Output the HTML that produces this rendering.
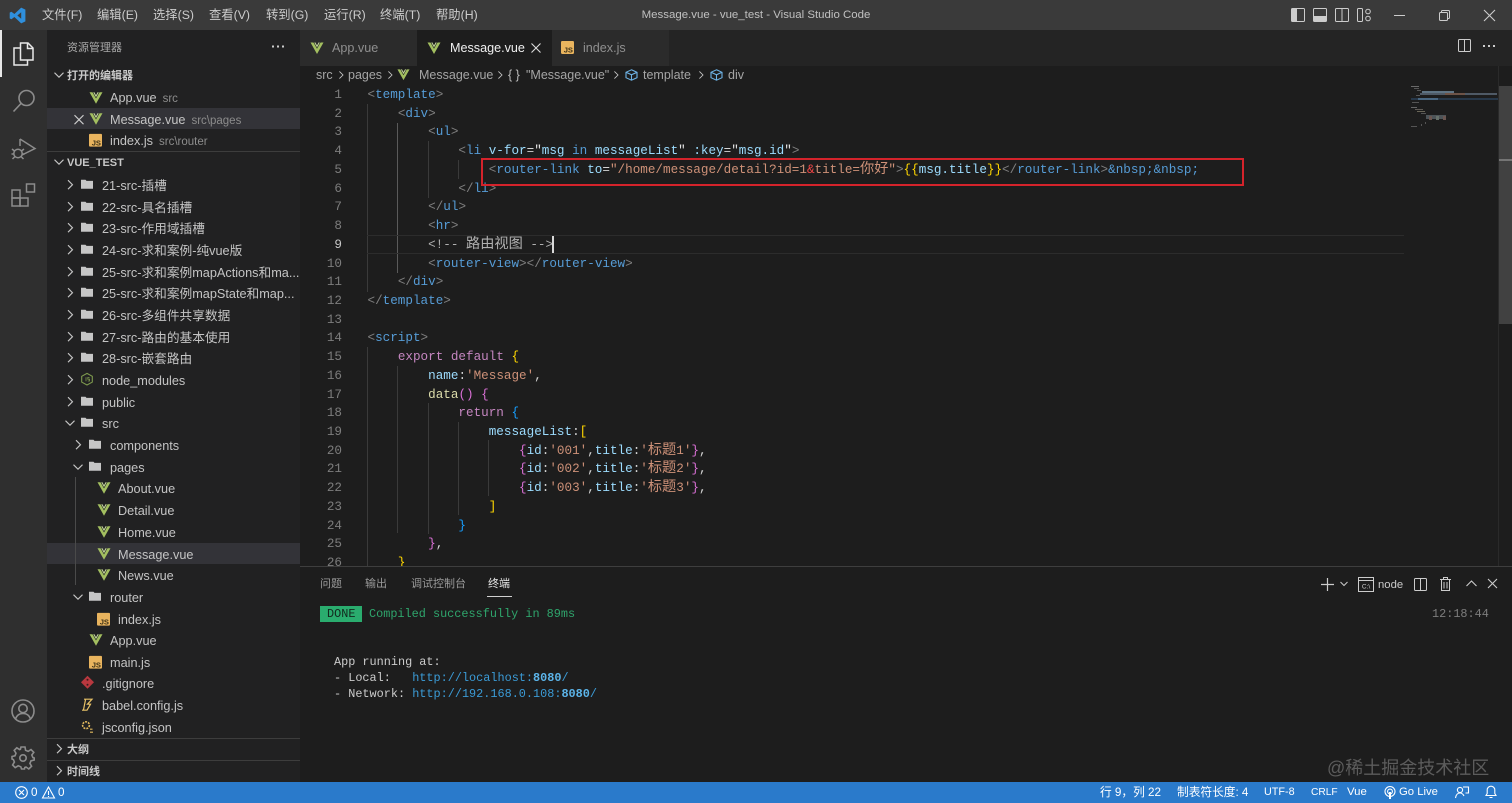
<!DOCTYPE html>
<html lang="zh"><head><meta charset="utf-8"><title>Message.vue - vue_test - Visual Studio Code</title>
<style>
*{box-sizing:border-box;margin:0;padding:0}
html,body{width:1512px;height:803px;overflow:hidden;background:#1d1d1d}
body{position:relative;font-family:"Liberation Sans","Noto Sans CJK SC",sans-serif;color:#ccc;font-size:13px}
.x{position:absolute;white-space:nowrap}
svg{position:absolute;overflow:visible}
.m{top:6px;font-size:12.3px;line-height:18px;color:#ccc}
.r{position:absolute;left:47px;width:253px;height:22px;line-height:22px;white-space:nowrap;overflow:hidden;color:#c4c4c4;font-size:12.7px}
.r span{position:absolute;top:1px}
.r svg{top:5px;transform:translateY(.7px)}
.r em{font-style:normal;font-size:11.5px;color:#8c8c8c;margin-left:6px}
.sel{background:#333338}
.h{font-size:11px;font-weight:bold;color:#c8c8c8}
.l{position:absolute;left:367.5px;height:19px;line-height:19px;white-space:pre;font-family:"Liberation Mono",monospace;font-size:12.63px;color:#d4d4d4}
.n{position:absolute;left:310px;width:32px;text-align:right;height:19px;line-height:19px;font-family:"Liberation Mono",monospace;font-size:12.63px;color:#7d7d7d}
.z{font-family:"Noto Sans CJK SC",sans-serif;font-size:14.2px;line-height:0;font-style:normal}
.g{color:#808080}.b{color:#569cd6}.a{color:#9cdcfe}.s{color:#ce9178}.p{color:#c586c0}.y{color:#dcdcaa}
.q{color:#ffd700}.v{color:#da70d6}.t{color:#179fff}.w{color:#e4e4e4}.c{color:#b0b0b0}.e{color:#f44747}
.gd{position:absolute;width:1px;background:#3a3a3a}
.tm{position:absolute;left:320px;white-space:pre;font-family:"Liberation Mono",monospace;font-size:11.85px;line-height:16px;color:#ccc}
.lk{color:#3b9bd6}.lkb{color:#5cb5ea;font-weight:bold}
.pt{position:absolute;top:576px;font-size:11px;line-height:16px;color:#9a9a9a}
.st{position:absolute;top:784px;font-size:11.7px;line-height:17px;color:#fff;white-space:nowrap}
.tab{position:absolute;top:30px;height:36px;line-height:36px;font-size:12.6px}
.bc{position:absolute;top:66px;line-height:18px;font-size:12.5px;color:#a5a5a5;white-space:nowrap}
</style></head><body>
<svg width="0" height="0" style="position:absolute">
<defs>
<symbol id="vue" viewBox="0 0 14 14"><path d="M0.5 1.5H3.5L7 7.8 10.5 1.5H13.5L7 13Z" fill="#a3bf60"/><path d="M3.6 1.5H5.2L7 4.6 8.8 1.5H10.4L7 7.4Z" fill="#2f3526"/><path d="M4.8 1.5L7 5.4 9.2 1.5" fill="none" stroke="#c8d8a0" stroke-width="1"/></symbol>
<symbol id="js" viewBox="0 0 13 13"><rect width="13" height="13" rx="1.2" fill="#e9b45e"/><text x="12" y="11.6" text-anchor="end" font-family="Liberation Sans" font-size="7.6" font-weight="bold" fill="#3c3118">JS</text></symbol>
<symbol id="cr" viewBox="0 0 10 10"><path d="M3 .5L7.5 5 3 9.5" fill="none" stroke="#c5c5c5" stroke-width="1.1"/></symbol>
<symbol id="cd" viewBox="0 0 10 10"><path d="M.5 3L5 7.5 9.5 3" fill="none" stroke="#c5c5c5" stroke-width="1.1"/></symbol>
<symbol id="fd" viewBox="0 0 12 11"><path d="M0 1H4.5L5.5 2.2H12V10H0Z" fill="#c6c6c6"/></symbol>
</defs></svg>

<!-- title bar -->
<div class="x" style="left:0;top:0;width:1512px;height:30px;background:#3a3a3a"></div>
<svg style="left:9px;top:7px" width="17" height="17" viewBox="0 0 17 17"><path d="M12.2.6L16.4 2.6V14.4L12.2 16.4 5.4 10 2.4 12.3 .7 11.4V5.6L2.4 4.7 5.4 7ZM12.2 5.2L8.4 8.5 12.2 11.8Z" fill="#2f8fdc"/></svg>
<div class="x m" style="left:42px">文件(F)</div>
<div class="x m" style="left:97px">编辑(E)</div>
<div class="x m" style="left:153px">选择(S)</div>
<div class="x m" style="left:209px">查看(V)</div>
<div class="x m" style="left:266px">转到(G)</div>
<div class="x m" style="left:324px">运行(R)</div>
<div class="x m" style="left:380px">终端(T)</div>
<div class="x m" style="left:436px">帮助(H)</div>
<div class="x" style="left:556px;width:400px;text-align:center;top:6px;font-size:11.45px;line-height:18px;color:#c0c0c0">Message.vue - vue_test - Visual Studio Code</div>
<svg style="left:1291px;top:8px" width="14" height="14"><rect x=".5" y=".5" width="13" height="13" rx="1" fill="none" stroke="#ccc"/><rect x="1" y="1" width="5" height="12" fill="#ccc"/></svg>
<svg style="left:1313px;top:8px" width="14" height="14"><rect x=".5" y=".5" width="13" height="13" rx="1" fill="none" stroke="#ccc"/><rect x="1" y="8" width="12" height="5" fill="#ccc"/></svg>
<svg style="left:1335px;top:8px" width="14" height="14"><rect x=".5" y=".5" width="13" height="13" rx="1" fill="none" stroke="#ccc"/><path d="M7 1V13" stroke="#ccc"/></svg>
<svg style="left:1357px;top:8px" width="14" height="14"><rect x=".5" y=".5" width="5" height="13" rx="1" fill="none" stroke="#ccc"/><circle cx="11" cy="3.5" r="2.3" fill="none" stroke="#ccc"/><circle cx="11" cy="10.5" r="2.3" fill="none" stroke="#ccc"/></svg>
<svg style="left:1394px;top:15px" width="11" height="1"><rect width="11" height="1" fill="#ccc"/></svg>
<svg style="left:1439px;top:10px" width="11" height="11" fill="none" stroke="#ccc"><rect x=".5" y="2.5" width="8" height="8" rx="1"/><path d="M2.5 2.5V1.5A1 1 0 0 1 3.5 .5H9.5A1 1 0 0 1 10.5 1.5V7.5A1 1 0 0 1 9.5 8.5H8.5"/></svg>
<svg style="left:1484px;top:10px" width="11" height="11" stroke="#ccc" stroke-width="1.1"><path d="M0 0L11 11M11 0L0 11"/></svg>

<!-- activity bar -->
<div class="x" style="left:0;top:30px;width:47px;height:752px;background:#2f2f2f"></div>
<div class="x" style="left:0;top:30px;width:2px;height:47px;background:#e8e8e8"></div>
<svg style="left:12px;top:42px" width="23" height="24" fill="none" stroke="#e8e8e8" stroke-width="1.5"><path d="M8.5 1H16L21 6V18H8.5Z"/><path d="M15.5 1V6.5H21"/><path d="M8.5 6H2V23H15.5V18"/></svg>
<svg style="left:12px;top:89px" width="24" height="24" fill="none" stroke="#8c8c8c" stroke-width="1.6"><circle cx="14.5" cy="9" r="7.5"/><path d="M9 14.5L1.5 22.5"/></svg>
<svg style="left:11px;top:136px" width="26" height="24" fill="none" stroke="#8c8c8c" stroke-width="1.5"><path d="M9 3L24 12.5 11 19"/><path d="M9 3V10"/><circle cx="7" cy="17.5" r="4.2"/><path d="M1 13L3.5 15M13 13L10.5 15M.5 18H3M13.5 18H11M1.5 23L4 20.5M12.5 23L10 20.5"/></svg>
<svg style="left:11px;top:183px" width="25" height="25" fill="none" stroke="#8c8c8c" stroke-width="1.5"><rect x="1" y="7" width="8" height="8"/><rect x="1" y="15" width="8" height="8"/><rect x="9" y="15" width="8" height="8"/><rect x="15.5" y="1" width="8" height="8"/></svg>
<svg style="left:11px;top:699px" width="24" height="24" fill="none" stroke="#8c8c8c" stroke-width="1.6"><circle cx="12" cy="12" r="11"/><circle cx="12" cy="9.5" r="4.2"/><path d="M4.5 20C6 15.5 9 14.5 12 14.5S18 15.5 19.5 20"/></svg>
<svg style="left:11px;top:746px" width="24" height="24" viewBox="0 0 24 24" fill="none" stroke="#8c8c8c" stroke-width="1.6"><path d="M10 1H14L14.6 4.3 17.2 5.4 20 3.5 22.8 6.3 20.8 9 21.9 11.6 23.2 12V14L20 14.8 18.9 17.4 20.6 20.2 17.8 23 15 21 13.8 21.5 13.5 23H10.5L9.8 20.8 7.2 19.8 4.2 21.6 1.6 19 3.4 16 2.4 13.6 1 13V10.5L4 9.8 5 7.2 3.2 4.4 5.8 1.8 8.6 3.6 9.4 3.3Z"/><circle cx="12" cy="12" r="3.2"/></svg>

<!-- sidebar -->
<div class="x" style="left:47px;top:30px;width:253px;height:752px;background:#212122"></div>
<div class="x" style="left:67px;top:39.5px;font-size:11px;line-height:16px;color:#a8a8a8">资源管理器</div>
<svg style="left:272px;top:45px" width="13" height="3" fill="#ccc"><rect width="2" height="2" y=".5"/><rect x="5" width="2" height="2" y=".5"/><rect x="10" width="2" height="2" y=".5"/></svg>

<div class="r" style="top:64px"><svg style="left:7px" width="10" height="10"><use href="#cd"/></svg><span class="h" style="left:20px">打开的编辑器</span></div>
<div class="r" style="top:86px"><svg style="left:42px;top:4px" width="14" height="14"><use href="#vue"/></svg><span style="left:63px">App.vue<em>src</em></span></div>
<div class="r sel" style="top:108px;height:21px"><svg style="left:27px;top:6px" width="10" height="10" stroke="#ccc" stroke-width="1.1"><path d="M.5 .5L9.5 9.5M9.5 .5L.5 9.5"/></svg><svg style="left:42px;top:3px" width="14" height="14"><use href="#vue"/></svg><span style="left:63px">Message.vue<em>src\pages</em></span></div>
<div class="r" style="top:129px"><svg style="left:42px;top:4px" width="13" height="13"><use href="#js"/></svg><span style="left:63px">index.js<em>src\router</em></span></div>

<div class="x" style="left:47px;top:151px;width:253px;height:1px;background:#3d3d3d"></div>
<div class="r" style="top:151px"><svg style="left:7px" width="10" height="10"><use href="#cd"/></svg><span class="h" style="left:20px">VUE_TEST</span></div>

<div class="r" style="top:174px"><svg style="left:18px" width="10" height="10"><use href="#cr"/></svg><svg style="left:34px;top:4px" width="12" height="11"><use href="#fd"/></svg><span style="left:55px">21-src-插槽</span></div>
<div class="r" style="top:195.5px"><svg style="left:18px" width="10" height="10"><use href="#cr"/></svg><svg style="left:34px;top:4px" width="12" height="11"><use href="#fd"/></svg><span style="left:55px">22-src-具名插槽</span></div>
<div class="r" style="top:217px"><svg style="left:18px" width="10" height="10"><use href="#cr"/></svg><svg style="left:34px;top:4px" width="12" height="11"><use href="#fd"/></svg><span style="left:55px">23-src-作用域插槽</span></div>
<div class="r" style="top:239px"><svg style="left:18px" width="10" height="10"><use href="#cr"/></svg><svg style="left:34px;top:4px" width="12" height="11"><use href="#fd"/></svg><span style="left:55px">24-src-求和案例-纯vue版</span></div>
<div class="r" style="top:260.5px"><svg style="left:18px" width="10" height="10"><use href="#cr"/></svg><svg style="left:34px;top:4px" width="12" height="11"><use href="#fd"/></svg><span style="left:55px">25-src-求和案例mapActions和ma...</span></div>
<div class="r" style="top:282px"><svg style="left:18px" width="10" height="10"><use href="#cr"/></svg><svg style="left:34px;top:4px" width="12" height="11"><use href="#fd"/></svg><span style="left:55px">25-src-求和案例mapState和map...</span></div>
<div class="r" style="top:304px"><svg style="left:18px" width="10" height="10"><use href="#cr"/></svg><svg style="left:34px;top:4px" width="12" height="11"><use href="#fd"/></svg><span style="left:55px">26-src-多组件共享数据</span></div>
<div class="r" style="top:325.5px"><svg style="left:18px" width="10" height="10"><use href="#cr"/></svg><svg style="left:34px;top:4px" width="12" height="11"><use href="#fd"/></svg><span style="left:55px">27-src-路由的基本使用</span></div>
<div class="r" style="top:347px"><svg style="left:18px" width="10" height="10"><use href="#cr"/></svg><svg style="left:34px;top:4px" width="12" height="11"><use href="#fd"/></svg><span style="left:55px">28-src-嵌套路由</span></div>
<div class="r" style="top:369px"><svg style="left:18px" width="10" height="10"><use href="#cr"/></svg><svg style="left:34px;top:3px" width="12" height="13" viewBox="0 0 12 13" fill="none" stroke="#7e9a4e" stroke-width="1.1"><path d="M6 .7L11.3 3.6V9.4L6 12.3 .7 9.4V3.6Z"/><path d="M5 4.5V8.5M8.5 4.8H6.8V6.5H8.5V8.3H6.8" stroke-width=".8"/></svg><span style="left:55px">node_modules</span></div>
<div class="r" style="top:390.5px"><svg style="left:18px" width="10" height="10"><use href="#cr"/></svg><svg style="left:34px;top:4px" width="12" height="11"><use href="#fd"/></svg><span style="left:55px">public</span></div>
<div class="r" style="top:412px"><svg style="left:18px" width="10" height="10"><use href="#cd"/></svg><svg style="left:34px;top:4px" width="12" height="11"><use href="#fd"/></svg><span style="left:55px">src</span></div>
<div class="r" style="top:434px"><svg style="left:26px" width="10" height="10"><use href="#cr"/></svg><svg style="left:42px;top:4px" width="12" height="11"><use href="#fd"/></svg><span style="left:63px">components</span></div>
<div class="r" style="top:456px"><svg style="left:26px" width="10" height="10"><use href="#cd"/></svg><svg style="left:42px;top:4px" width="12" height="11"><use href="#fd"/></svg><span style="left:63px">pages</span></div>
<div class="r" style="top:477px"><svg style="left:50px;top:3px" width="14" height="14"><use href="#vue"/></svg><span style="left:71px">About.vue</span></div>
<div class="r" style="top:499px"><svg style="left:50px;top:3px" width="14" height="14"><use href="#vue"/></svg><span style="left:71px">Detail.vue</span></div>
<div class="r" style="top:521px"><svg style="left:50px;top:3px" width="14" height="14"><use href="#vue"/></svg><span style="left:71px">Home.vue</span></div>
<div class="r sel" style="top:543px;height:21px"><svg style="left:50px;top:3px" width="14" height="14"><use href="#vue"/></svg><span style="left:71px">Message.vue</span></div>
<div class="r" style="top:564px"><svg style="left:50px;top:3px" width="14" height="14"><use href="#vue"/></svg><span style="left:71px">News.vue</span></div>
<div class="x" style="left:75px;top:477px;width:1px;height:108px;background:#4a4a4a"></div>
<div class="r" style="top:586px"><svg style="left:26px" width="10" height="10"><use href="#cd"/></svg><svg style="left:42px;top:4px" width="12" height="11"><use href="#fd"/></svg><span style="left:63px">router</span></div>
<div class="r" style="top:607.5px"><svg style="left:50px;top:4px" width="13" height="13"><use href="#js"/></svg><span style="left:71px">index.js</span></div>
<div class="r" style="top:629px"><svg style="left:42px;top:3px" width="14" height="14"><use href="#vue"/></svg><span style="left:63px">App.vue</span></div>
<div class="r" style="top:650.5px"><svg style="left:42px;top:4px" width="13" height="13"><use href="#js"/></svg><span style="left:63px">main.js</span></div>
<div class="r" style="top:672px"><svg style="left:34px;top:3px" width="13" height="13" viewBox="0 0 13 13"><path d="M6.5 0L13 6.5 6.5 13 0 6.5Z" fill="#b8383f"/><circle cx="6.5" cy="4" r="1" fill="#3a1a1c"/><circle cx="6.5" cy="9" r="1" fill="#3a1a1c"/></svg><span style="left:55px">.gitignore</span></div>
<div class="r" style="top:694px"><svg style="left:34px;top:3px" width="12" height="14" viewBox="0 0 12 14" fill="none" stroke="#e8c267" stroke-width="1.2"><path d="M3 1.5H11L6.5 6.5H9.5L6 12.5H1M4.5 2L2.5 12"/></svg><span style="left:55px">babel.config.js</span></div>
<div class="r" style="top:716px"><svg style="left:34px;top:3px" width="13" height="14" viewBox="0 0 13 14" fill="none" stroke="#e0b85e" stroke-width="1.6"><circle cx="5" cy="5.5" r="3.4" stroke-dasharray="2 1"/><path d="M9 9.5H11.5M9 12.5H12" stroke-width="1.2"/></svg><span style="left:55px">jsconfig.json</span></div>
<div class="x" style="left:47px;top:738px;width:253px;height:1px;background:#3d3d3d"></div>
<div class="r" style="top:738px"><svg style="left:7px" width="10" height="10"><use href="#cr"/></svg><span class="h" style="left:20px">大纲</span></div>
<div class="x" style="left:47px;top:760px;width:253px;height:1px;background:#3d3d3d"></div>
<div class="r" style="top:760px"><svg style="left:7px" width="10" height="10"><use href="#cr"/></svg><span class="h" style="left:20px">时间线</span></div>

<!-- tabs -->
<div class="x" style="left:300px;top:30px;width:1212px;height:36px;background:#242424"></div>
<div class="tab" style="left:300px;width:117px;background:#2b2b2b;color:#8f8f8f"><svg style="left:10px;top:11px" width="14" height="14"><use href="#vue"/></svg><span class="x" style="left:32px">App.vue</span></div>
<div class="tab" style="left:417px;width:135px;background:#1d1d1d;color:#f0f0f0"><svg style="left:10px;top:11px" width="14" height="14"><use href="#vue"/></svg><span class="x" style="left:33px">Message.vue</span><svg style="left:114px;top:13px" width="10" height="10" stroke="#ddd" stroke-width="1.1"><path d="M.5 .5L9.5 9.5M9.5 .5L.5 9.5"/></svg></div>
<div class="tab" style="left:552px;width:117px;background:#2b2b2b;color:#8f8f8f"><svg style="left:9px;top:11px" width="13" height="13"><use href="#js"/></svg><span class="x" style="left:31px">index.js</span></div>
<svg style="left:1458px;top:39px" width="13" height="13" fill="none" stroke="#ccc"><rect x=".5" y=".5" width="12" height="12" rx="1"/><path d="M6.5 1V12.5"/></svg>
<svg style="left:1483px;top:45px" width="13" height="3" fill="#ccc"><rect width="2" height="2"/><rect x="5" width="2" height="2"/><rect x="10" width="2" height="2"/></svg>

<!-- breadcrumbs -->
<div class="bc" style="left:316px">src</div>
<svg style="left:337px;top:71px" width="8" height="8"><use href="#cr"/></svg>
<div class="bc" style="left:348px">pages</div>
<svg style="left:386px;top:71px" width="8" height="8"><use href="#cr"/></svg>
<svg style="left:397px;top:68px" width="13" height="13"><use href="#vue"/></svg>
<div class="bc" style="left:419px">Message.vue</div>
<svg style="left:496px;top:71px" width="8" height="8"><use href="#cr"/></svg>
<div class="bc" style="left:508px;color:#bbb">{ }</div>
<div class="bc" style="left:526px">"Message.vue"</div>
<svg style="left:612px;top:71px" width="8" height="8"><use href="#cr"/></svg>
<svg style="left:625px;top:69px" width="13" height="12" viewBox="0 0 13 12" fill="none" stroke="#6eb3e6" stroke-width="1.1"><path d="M6.5 .8L12 3.3V8.7L6.5 11.2 1 8.7V3.3ZM1 3.3L6.5 5.8 12 3.3M6.5 5.8V11"/></svg>
<div class="bc" style="left:643px">template</div>
<svg style="left:697px;top:71px" width="8" height="8"><use href="#cr"/></svg>
<svg style="left:710px;top:69px" width="13" height="12" viewBox="0 0 13 12" fill="none" stroke="#6eb3e6" stroke-width="1.1"><path d="M6.5 .8L12 3.3V8.7L6.5 11.2 1 8.7V3.3ZM1 3.3L6.5 5.8 12 3.3M6.5 5.8V11"/></svg>
<div class="bc" style="left:728px">div</div>

<!-- indent guides -->
<div class="gd" style="left:367px;top:104px;height:188px"></div>
<div class="gd" style="left:397px;top:123px;height:150px;background:#5a5a5a"></div>
<div class="gd" style="left:428px;top:141px;height:57px"></div>
<div class="gd" style="left:458px;top:160px;height:19px"></div>
<div class="gd" style="left:367px;top:347px;height:219px"></div>
<div class="gd" style="left:397px;top:366px;height:167px"></div>
<div class="gd" style="left:428px;top:403px;height:131px"></div>
<div class="gd" style="left:458px;top:422px;height:93px"></div>
<div class="gd" style="left:488px;top:440px;height:56px"></div>
<!-- current line -->
<div class="x" style="left:367px;top:235px;width:1037px;height:19px;border-top:1px solid #2c2c2c;border-bottom:1px solid #2c2c2c"></div>

<!-- line numbers -->
<div class="n" style="top:85px">1</div><div class="n" style="top:103.7px">2</div><div class="n" style="top:122.4px">3</div><div class="n" style="top:141.2px">4</div><div class="n" style="top:159.9px">5</div><div class="n" style="top:178.6px">6</div><div class="n" style="top:197.3px">7</div><div class="n" style="top:216px">8</div><div class="n" style="top:234.8px;color:#c6c6c6">9</div><div class="n" style="top:253.5px">10</div><div class="n" style="top:272.2px">11</div><div class="n" style="top:290.9px">12</div><div class="n" style="top:309.6px">13</div><div class="n" style="top:328.4px">14</div><div class="n" style="top:347.1px">15</div><div class="n" style="top:365.8px">16</div><div class="n" style="top:384.5px">17</div><div class="n" style="top:403.2px">18</div><div class="n" style="top:422px">19</div><div class="n" style="top:440.7px">20</div><div class="n" style="top:459.4px">21</div><div class="n" style="top:478.1px">22</div><div class="n" style="top:496.8px">23</div><div class="n" style="top:515.6px">24</div><div class="n" style="top:534.3px">25</div><div class="n" style="top:553px;height:13px;overflow:hidden">26</div>

<!-- code -->
<div class="l" style="top:85px"><span class="g">&lt;</span><span class="b">template</span><span class="g">&gt;</span></div>
<div class="l" style="top:103.7px">    <span class="g">&lt;</span><span class="b">div</span><span class="g">&gt;</span></div>
<div class="l" style="top:122.4px">        <span class="g">&lt;</span><span class="b">ul</span><span class="g">&gt;</span></div>
<div class="l" style="top:141.2px">            <span class="g">&lt;</span><span class="b">li</span> <span class="a">v-for</span>=<span class="w">"</span><span class="a">msg</span> <span class="b">in</span> <span class="a">messageList</span><span class="w">"</span> <span class="a">:key</span>=<span class="w">"</span><span class="a">msg.id</span><span class="w">"</span><span class="g">&gt;</span></div>
<div class="l" style="top:159.9px">                <span class="g">&lt;</span><span class="b">router-link</span> <span class="a">to</span>=<span class="s">"/home/message/detail?id=1</span><span class="e">&amp;</span><span class="s">title=<i class="z">你好</i>"</span><span class="g">&gt;</span><span class="q">{{</span><span class="a">msg.title</span><span class="q">}}</span><span class="g">&lt;/</span><span class="b">router-link</span><span class="g">&gt;</span><span class="b">&amp;nbsp;&amp;nbsp;</span></div>
<div class="l" style="top:178.6px">            <span class="g">&lt;/</span><span class="b">li</span><span class="g">&gt;</span></div>
<div class="l" style="top:197.3px">        <span class="g">&lt;/</span><span class="b">ul</span><span class="g">&gt;</span></div>
<div class="l" style="top:216px">        <span class="g">&lt;</span><span class="b">hr</span><span class="g">&gt;</span></div>
<div class="l c" style="top:234.8px">        &lt;!-- <i class="z">路由视图</i> --&gt;</div>
<div class="x" style="left:552px;top:236px;width:1.5px;height:17px;background:#d8d8d8"></div>
<div class="l" style="top:253.5px">        <span class="g">&lt;</span><span class="b">router-view</span><span class="g">&gt;&lt;/</span><span class="b">router-view</span><span class="g">&gt;</span></div>
<div class="l" style="top:272.2px">    <span class="g">&lt;/</span><span class="b">div</span><span class="g">&gt;</span></div>
<div class="l" style="top:290.9px"><span class="g">&lt;/</span><span class="b">template</span><span class="g">&gt;</span></div>
<div class="l" style="top:328.4px"><span class="g">&lt;</span><span class="b">script</span><span class="g">&gt;</span></div>
<div class="l" style="top:347.1px">    <span class="p">export</span> <span class="p">default</span> <span class="q">{</span></div>
<div class="l" style="top:365.8px">        <span class="a">name</span>:<span class="s">'Message'</span>,</div>
<div class="l" style="top:384.5px">        <span class="y">data</span><span class="v">()</span> <span class="v">{</span></div>
<div class="l" style="top:403.2px">            <span class="p">return</span> <span class="t">{</span></div>
<div class="l" style="top:422px">                <span class="a">messageList</span>:<span class="q">[</span></div>
<div class="l" style="top:440.7px">                    <span class="v">{</span><span class="a">id</span>:<span class="s">'001'</span>,<span class="a">title</span>:<span class="s">'<i class="z">标题</i>1'</span><span class="v">}</span>,</div>
<div class="l" style="top:459.4px">                    <span class="v">{</span><span class="a">id</span>:<span class="s">'002'</span>,<span class="a">title</span>:<span class="s">'<i class="z">标题</i>2'</span><span class="v">}</span>,</div>
<div class="l" style="top:478.1px">                    <span class="v">{</span><span class="a">id</span>:<span class="s">'003'</span>,<span class="a">title</span>:<span class="s">'<i class="z">标题</i>3'</span><span class="v">}</span>,</div>
<div class="l" style="top:496.8px">                <span class="q">]</span></div>
<div class="l" style="top:515.6px">            <span class="t">}</span></div>
<div class="l" style="top:534.3px">        <span class="v">}</span>,</div>
<div class="l" style="top:553px;height:13px;overflow:hidden">    <span class="q">}</span></div>

<!-- red box -->
<div class="x" style="left:481px;top:158px;width:763px;height:28px;border:2.5px solid #d4232b"></div>

<!-- minimap -->
<div class="x" style="left:1411px;top:86px;width:8px;height:1px;background:#6a6a6a"></div>
<div class="x" style="left:1414px;top:88px;width:5px;height:1px;background:#555"></div>
<div class="x" style="left:1417px;top:90px;width:4px;height:1px;background:#555"></div>
<div class="x" style="left:1422px;top:91px;width:32px;height:2px;background:#5f7484"></div>
<div class="x" style="left:1420px;top:92.5px;width:77px;height:2px;background:#4f5a66"></div>
<div class="x" style="left:1445px;top:92.5px;width:20px;height:2px;background:#6d5347"></div>
<div class="x" style="left:1416px;top:95px;width:4px;height:1px;background:#555"></div>
<div class="x" style="left:1411px;top:98px;width:87px;height:2px;background:#27384a"></div>
<div class="x" style="left:1418px;top:98px;width:20px;height:2px;background:#496782"></div>
<div class="x" style="left:1412px;top:102px;width:7px;height:1px;background:#555"></div>
<div class="x" style="left:1411px;top:107px;width:6px;height:1px;background:#666"></div>
<div class="x" style="left:1415px;top:109px;width:8px;height:1px;background:#5e5a55"></div>
<div class="x" style="left:1417px;top:111px;width:8px;height:1px;background:#6a6658"></div>
<div class="x" style="left:1421px;top:113px;width:5px;height:1px;background:#555"></div>
<div class="x" style="left:1426px;top:115px;width:20px;height:4px;background:#4d5458"></div>
<div class="x" style="left:1429px;top:116px;width:3px;height:4px;background:#6a5651"></div>
<div class="x" style="left:1436px;top:116px;width:3px;height:4px;background:#66706a"></div>
<div class="x" style="left:1443px;top:116px;width:3px;height:4px;background:#6a5651"></div>
<div class="x" style="left:1425px;top:122px;width:1px;height:2px;background:#555"></div>
<div class="x" style="left:1421px;top:124px;width:1px;height:2px;background:#555"></div>
<div class="x" style="left:1411px;top:126px;width:6px;height:1px;background:#555"></div>
<!-- scrollbar -->
<div class="x" style="left:1498px;top:66px;width:1px;height:500px;background:#2a2a2a"></div>
<div class="x" style="left:1499px;top:86px;width:13px;height:238px;background:#414141"></div>
<div class="x" style="left:1499px;top:159px;width:13px;height:2px;background:#757575"></div>

<!-- panel -->
<div class="x" style="left:300px;top:566px;width:1212px;height:216px;background:#1d1d1d;border-top:1px solid #3e3e3e"></div>
<div class="pt" style="left:320px">问题</div>
<div class="pt" style="left:365px">输出</div>
<div class="pt" style="left:411px">调试控制台</div>
<div class="pt" style="left:488px;color:#e7e7e7">终端</div>
<div class="x" style="left:487px;top:596px;width:25px;height:1px;background:#d0d0d0"></div>
<svg style="left:1321px;top:578px" width="13" height="13" stroke="#ccc" stroke-width="1.2"><path d="M6.5 0V13M0 6.5H13"/></svg>
<svg style="left:1340px;top:581px" width="8" height="6" fill="none" stroke="#ccc"><path d="M.5 1L4 4.5 7.5 1"/></svg>
<svg style="left:1358px;top:577px" width="16" height="15" fill="none" stroke="#ccc"><rect x=".5" y=".5" width="15" height="14"/><path d="M1 3.5H15"/><text x="8" y="11.5" font-family="Liberation Sans" font-size="6.5" fill="#ccc" stroke="none" text-anchor="middle">C:\</text></svg>
<div class="x" style="left:1378px;top:577px;font-size:11.3px;line-height:16px;color:#ccc">node</div>
<svg style="left:1414px;top:578px" width="13" height="13" fill="none" stroke="#ccc"><rect x=".5" y=".5" width="12" height="12" rx="1"/><path d="M6.5 1V12.5"/></svg>
<svg style="left:1440px;top:577px" width="11" height="14" fill="none" stroke="#ccc"><path d="M1.5 3V13.5H9.5V3M0 2.5H11M3.5 2.5V.5H7.5V2.5M4 5V11.5M7 5V11.5"/></svg>
<svg style="left:1466px;top:580px" width="11" height="7" fill="none" stroke="#ccc" stroke-width="1.1"><path d="M.5 6L5.5 1 10.5 6"/></svg>
<svg style="left:1488px;top:579px" width="9" height="9" stroke="#ccc" stroke-width="1.1"><path d="M0 0L9 9M9 0L0 9"/></svg>

<div class="x" style="left:320px;top:606px;width:42px;height:16px;background:#2aac6e"></div>
<div class="tm" style="left:327px;top:606px;color:#12281d">DONE</div>
<div class="tm" style="left:369px;top:606px;color:#2fa56c">Compiled successfully in 89ms</div>
<div class="tm" style="left:1432px;top:606px;color:#7d7d7d">12:18:44</div>
<div class="tm" style="left:334px;top:654px">App running at:</div>
<div class="tm" style="left:334px;top:670px">- Local:   <span class="lk">http://localhost:<span class="lkb">8080</span>/</span></div>
<div class="tm" style="left:334px;top:686px">- Network: <span class="lk">http://192.168.0.108:<span class="lkb">8080</span>/</span></div>

<!-- watermark -->
<div class="x" style="left:1327px;top:756px;font-size:18px;line-height:24px;color:#5c5c5c">@稀土掘金技术社区</div>

<!-- status bar -->
<div class="x" style="left:0;top:782px;width:1512px;height:21px;background:#2a7acb"></div>
<svg style="left:15px;top:786px" width="13" height="13" fill="none" stroke="#fff" stroke-width="1.1"><circle cx="6.5" cy="6.5" r="5.8"/><path d="M4 4L9 9M9 4L4 9"/></svg>
<div class="st" style="left:31px">0</div>
<svg style="left:42px;top:786px" width="13" height="13" fill="none" stroke="#fff" stroke-width="1.1"><path d="M6.5 1L12.5 12H.5Z"/><path d="M6.5 5V9M6.5 10V11"/></svg>
<div class="st" style="left:58px">0</div>
<div class="st" style="left:1100px">行 9，列 22</div>
<div class="st" style="left:1177px">制表符长度: 4</div>
<div class="st" style="left:1264px;font-size:10.8px">UTF-8</div>
<div class="st" style="left:1311px;font-size:10.2px">CRLF</div>
<div class="st" style="left:1347px;font-size:11.4px">Vue</div>
<svg style="left:1384px;top:786px" width="12" height="13" fill="none" stroke="#fff" stroke-width="1.1"><circle cx="6" cy="5.5" r="5"/><circle cx="6" cy="5.5" r="2.4"/><path d="M6 6V13" stroke-width="2"/></svg>
<div class="st" style="left:1399px;font-size:11.3px">Go Live</div>
<svg style="left:1455px;top:786px" width="14" height="13" fill="none" stroke="#fff" stroke-width="1.1"><circle cx="5" cy="4" r="2.6"/><path d="M.5 12C1 8.5 3 7 5 7S8 8 9 10M8 1H13.5V7H10.5"/></svg>
<svg style="left:1485px;top:785px" width="12" height="14" fill="none" stroke="#fff" stroke-width="1.1"><path d="M1 10.5H11L9.8 8.5V5A3.8 3.8 0 0 0 2.2 5V8.5ZM4.5 12.5H7.5"/></svg>
</body></html>
